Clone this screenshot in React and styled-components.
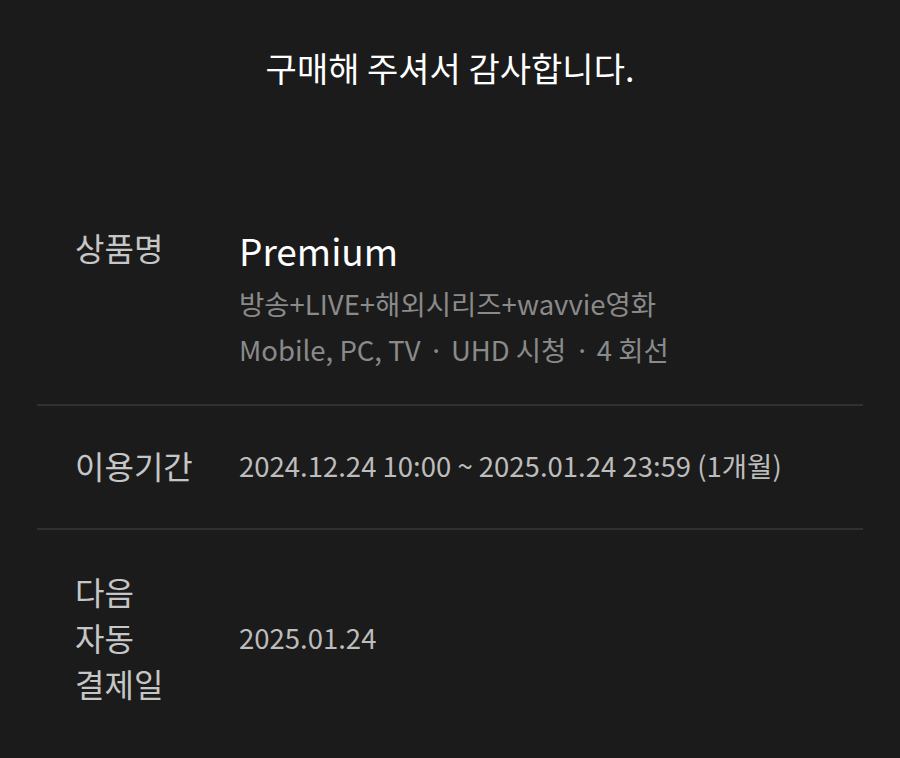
import React from 'react';
import styled, { createGlobalStyle } from 'styled-components';

const GlobalStyle = createGlobalStyle`
  html, body {
    margin: 0;
    padding: 0;
    background: #1b1b1b;
  }
  body {
    font-family: "Noto Sans CJK KR", "Noto Sans", sans-serif;
    -webkit-font-smoothing: antialiased;
  }
`;

const Page = styled.div`
  min-height: 758px;
  background: #1b1b1b;
  padding: 0 37px;
  box-sizing: border-box;
`;

const Title = styled.h1`
  margin: 0;
  padding-top: 45px;
  font-size: 34px;
  line-height: 46px;
  font-weight: 400;
  color: #ffffff;
  text-align: center;
`;

const List = styled.div`
  margin-top: 133px;
`;

const Row = styled.div`
  display: flex;
  align-items: ${(p) => (p.$center ? 'center' : 'flex-start')};
  padding: ${(p) => p.$pad || '38px 38px 38px'};
  border-top: ${(p) => (p.$first ? 'none' : '2px solid #303030')};
`;

const Label = styled.div`
  width: 122px;
  flex-shrink: 0;
  margin-right: 42px;
  font-size: 32px;
  line-height: 46px;
  color: #c6c6c6;
  word-break: keep-all;
`;

const Value = styled.div`
  display: flex;
  flex-direction: column;
`;

const ProductName = styled.div`
  font-size: 37px;
  line-height: 52px;
  color: #ffffff;
  margin-bottom: 4px;
`;

const SubLine = styled.div`
  font-size: 27.5px;
  line-height: 46px;
  color: #8a8a8a;
  white-space: nowrap;
`;

const Dot = styled.span`
  margin: 0 7px 0 8px;
`;

const Text = styled.div`
  font-size: 27.5px;
  line-height: 46px;
  color: #bdbdbd;
  white-space: nowrap;
`;

export default function App() {
  return (
    <Page>
      <GlobalStyle />
      <Title>구매해 주셔서 감사합니다.</Title>
      <List>
        <Row $first $pad="0 38px 32px">
          <Label>상품명</Label>
          <Value>
            <ProductName>Premium</ProductName>
            <SubLine>방송+LIVE+해외시리즈+wavvie영화</SubLine>
            <SubLine>
              Mobile, PC, TV<Dot>·</Dot>UHD 시청<Dot>·</Dot>4 회선
            </SubLine>
          </Value>
        </Row>
        <Row $center $pad="36px 38px 40px">
          <Label>이용기간</Label>
          <Text>2024.12.24 10:00 ~ 2025.01.24 23:59 (1개월)</Text>
        </Row>
        <Row $center>
          <Label>다음 자동 결제일</Label>
          <Text>2025.01.24</Text>
        </Row>
      </List>
    </Page>
  );
}
